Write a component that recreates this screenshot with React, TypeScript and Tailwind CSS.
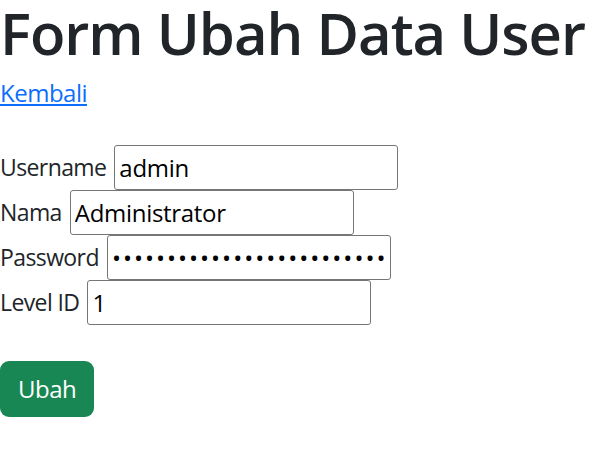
const font = { fontFamily: '"Segoe UI", "Open Sans", "Noto Sans", sans-serif' }

const fields = [
  { label: "Username", type: "text", value: "admin" },
  { label: "Nama", type: "text", value: "Administrator" },
  { label: "Password", type: "password", value: "$2y$12$Kq8zWm3nVb7XcRt5LpQa9eUj0hDfGsYiOw1" },
  { label: "Level ID", type: "text", value: "1" },
]

export default function App() {
  return (
    <div className="min-h-[451px] bg-white text-[#212529]" style={font}>
      <h1 className="text-[58px] leading-[66px] font-semibold mb-[9px] tracking-[-1px] whitespace-nowrap">
        Form Ubah Data User
      </h1>
      <a href="#" className="text-[24px] leading-[36px] text-[#0d6efd] underline tracking-[-0.5px]">
        Kembali
      </a>
      <form className="mt-[34px]" onSubmit={(e) => e.preventDefault()}>
        {fields.map((f) => (
          <div key={f.label} className="flex items-center h-[45px] text-[23px]">
            <label className="mr-[8px] tracking-[-0.6px]">{f.label}</label>
            <input
              type={f.type}
              defaultValue={f.value}
              className={`w-[284px] h-[45px] border border-[#767676] rounded-[3px] px-[4px] text-black text-[24px] outline-none ${
                f.type === "password" ? "tracking-[2px]" : "tracking-[-0.3px]"
              }`}
              style={font}
            />
          </div>
        ))}
        <button
          type="submit"
          className="mt-[36px] h-[56px] px-[18px] rounded-[9px] bg-[#198754] text-white text-[24px] leading-[36px] tracking-[-0.5px]"
          style={font}
        >
          Ubah
        </button>
      </form>
    </div>
  )
}
